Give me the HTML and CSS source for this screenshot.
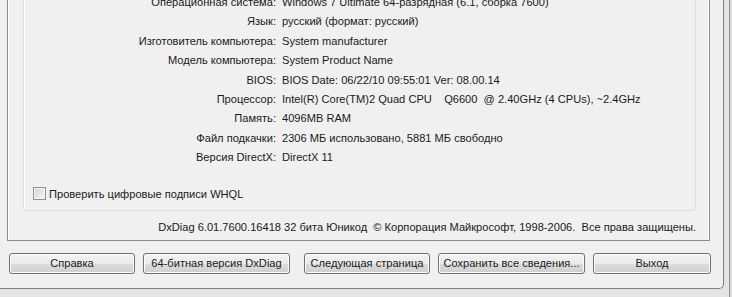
FILE: index.html
```html
<!DOCTYPE html>
<html lang="ru">
  <head>
    <meta charset="utf-8" />
    <title>Средство диагностики DirectX</title>
    <link rel="stylesheet" href="styles.css">
  </head>
  <body>
    <div class="frame">
      <div class="window">
        <div class="tab">
          <div class="group">
            <div class="info">
              <span class="lbl">Операционная система:</span><span class="val">Windows 7 Ultimate 64-разрядная (6.1, сборка 7600)</span>
              <span class="lbl">Язык:</span><span class="val">русский (формат: русский)</span>
              <span class="lbl">Изготовитель компьютера:</span><span class="val">System manufacturer</span>
              <span class="lbl">Модель компьютера:</span><span class="val">System Product Name</span>
              <span class="lbl">BIOS:</span><span class="val">BIOS Date: 06/22/10 09:55:01 Ver: 08.00.14</span>
              <span class="lbl">Процессор:</span><span class="val">Intel(R) Core(TM)2 Quad CPU&nbsp;&nbsp;&nbsp; Q6600&nbsp; @ 2.40GHz (4 CPUs), ~2.4GHz</span>
              <span class="lbl">Память:</span><span class="val">4096MB RAM</span>
              <span class="lbl">Файл подкачки:</span><span class="val">2306 МБ использовано, 5881 МБ свободно</span>
              <span class="lbl">Версия DirectX:</span><span class="val">DirectX 11</span>
            </div>
            <label class="check"><span class="box"></span>Проверить цифровые подписи WHQL</label>
          </div>
          <p class="footer">DxDiag 6.01.7600.16418 32 бита Юникод&nbsp; © Корпорация Майкрософт, 1998-2006.&nbsp; Все права защищены.</p>
        </div>
        <div class="buttons">
          <button class="btn w126">Справка</button>
          <button class="btn w147">64-битная версия DxDiag</button>
          <button class="btn w126 apart">Следующая страница</button>
          <button class="btn w147">Сохранить все сведения...</button>
          <button class="btn w118">Выход</button>
        </div>
      </div>
    </div>
  </body>
</html>
```

FILE: styles.css
```css
html, body {
  margin: 0;
  height: 100%;
  overflow: hidden;
}
body {
  background: #dadada;
  font-family: "Liberation Sans", Arial, sans-serif;
  font-size: 11.1px;
  color: #1a1a1a;
}
.frame {
  width: 730px;
  height: 100%;
  border-right: 1px solid #8e8e8e;
  box-sizing: border-box;
  background: #e4e4e4;
}
.window {
  width: 724px;
  height: 289px;
  box-sizing: border-box;
  background: #f0f0f0;
  border-right: 1px solid #7f7f7f;
  border-bottom: 1px solid #7f7f7f;
  border-bottom-right-radius: 5px;
  overflow: hidden;
  padding-left: 7px;
}
.tab {
  width: 703px;
  box-sizing: border-box;
  margin-top: -20px;
  border: 1px solid #898c95;
  box-shadow: inset 1px 0 0 #fff, inset -1px 0 0 #fff;
  padding: 6px 13px 5px 15px;
}
.group {
  border: 1px solid #d5dfe5;
  border-radius: 3px;
  box-shadow: inset 1px 1px 0 #fff;
  padding: 5px 0 9px 0;
}
.info {
  display: grid;
  grid-template-columns: 252px 1fr;
  column-gap: 6px;
  line-height: 19.4px;
  white-space: nowrap;
}
.lbl {
  text-align: right;
}
.check {
  display: flex;
  align-items: center;
  height: 14px;
  margin: 19.3px 0 0 9px;
  gap: 3px;
}
.box {
  width: 11px;
  height: 11px;
  border: 1px solid #8f8f8f;
  background: linear-gradient(135deg, #d4d4d4, #f6f6f6);
  box-shadow: inset 0 0 0 1px #f4f4f4;
}
.footer {
  margin: 8px 0 0;
  line-height: 16px;
  text-align: right;
  white-space: nowrap;
}
.buttons {
  display: flex;
  gap: 8px;
  margin: 12px 0 0 2px;
}
.btn {
  height: 21px;
  padding: 0;
  font: inherit;
  color: #1a1a1a;
  white-space: nowrap;
  border: 1px solid #707070;
  border-radius: 3px;
  background: linear-gradient(#f2f2f2 0%, #ebebeb 50%, #dddddd 51%, #cfcfcf 100%);
  box-shadow: inset 0 0 0 1px #fcfcfc;
}
.w126 { width: 126px; }
.w147 { width: 147px; }
.w118 { width: 118px; }
.apart { margin-left: 6px; }
```
